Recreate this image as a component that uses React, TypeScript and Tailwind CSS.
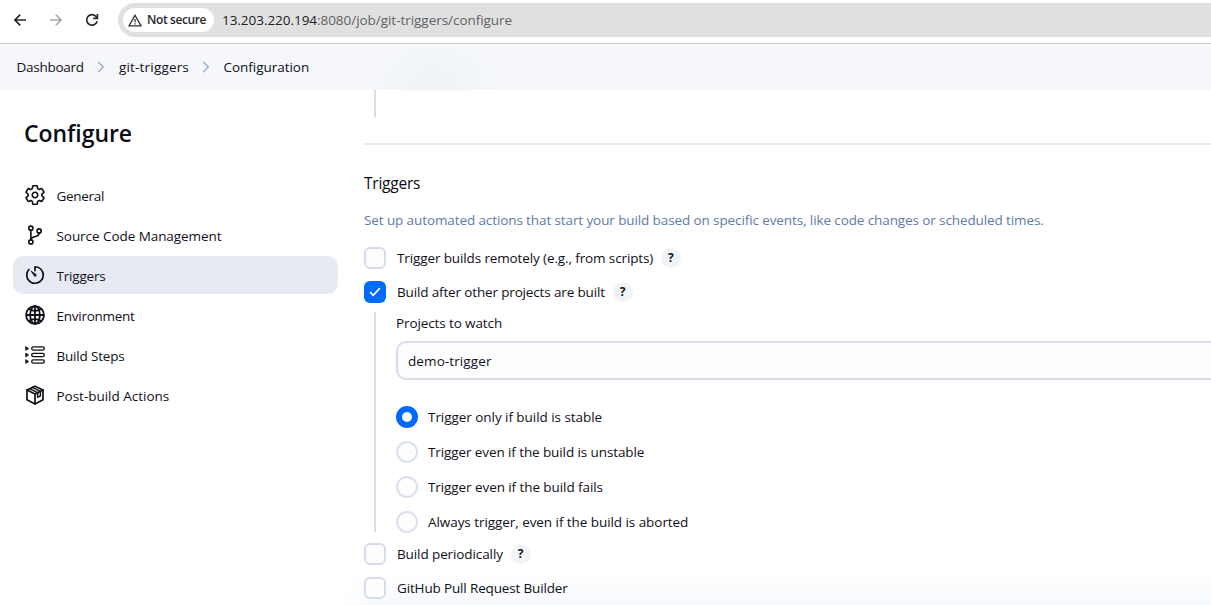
import type { ReactNode } from 'react';
import { IoGitBranchOutline, IoGlobeOutline, IoSettingsOutline, IoTimerOutline } from 'react-icons/io5';

function StepsIcon() {
  return (
    <svg width="20" height="20" viewBox="0 0 20 20" fill="none" stroke="currentColor" strokeWidth="1.35" strokeLinejoin="round">
      {[3.5, 10, 16.5].map((y) => (
        <g key={y}>
          <path d={`M0.9 ${y - 1.5} L3.2 ${y} L0.9 ${y + 1.5} Z`} />
          <rect x="6.7" y={y - 1.6} width="12.6" height="3.2" rx="1.6" />
        </g>
      ))}
    </svg>
  );
}

function PackageIcon() {
  return (
    <svg width="20" height="20" viewBox="0 0 20 20" fill="none" stroke="currentColor" strokeWidth="1.7" strokeLinejoin="round" strokeLinecap="round">
      <path d="M10 1.2 L18 5 V14.8 L10 18.9 L2 14.8 V5 Z" />
      <path d="M2 5 L10 9 L18 5 M10 9 V18.9" />
      <path d="M4.6 3.7 L12.6 7.7 V12.3 L15.4 10.9 V6.3 L7.4 2.4" strokeWidth="1.5" />
    </svg>
  );
}

function Chevron() {
  return (
    <svg width="8" height="12" viewBox="0 0 8 12" fill="none" stroke="#96adcd" strokeWidth="1.3" strokeLinecap="round" strokeLinejoin="round">
      <path d="M1.5 1.2 L6.3 6 L1.5 10.8" />
    </svg>
  );
}

function BrowserBar() {
  return (
    <div className="flex h-11 shrink-0 items-start border-b border-[#c9cdcb] bg-white pt-[3px]">
      <div className="flex h-[34px] w-[118px] shrink-0 items-center pl-[13px]">
        <svg width="14" height="14" viewBox="0 0 14 14" fill="none" stroke="#26292c" strokeWidth="1.7">
          <path d="M13 7 H2 M7.2 1.7 L1.9 7 L7.2 12.3" />
        </svg>
        <svg className="ml-[22px]" width="14" height="14" viewBox="0 0 14 14" fill="none" stroke="#a2a4a6" strokeWidth="1.5">
          <path d="M1 7 H12 M6.8 1.7 L12.1 7 L6.8 12.3" />
        </svg>
        <svg className="ml-[22px]" width="14" height="14" viewBox="0 0 14 14" fill="none" stroke="#26292c" strokeWidth="1.7">
          <path d="M12.1 8.2 A5.3 5.3 0 1 1 11.2 3.7 L12.2 5" />
          <path d="M12.4 1 V5.3 H8.2" />
        </svg>
      </div>
      <div className="flex h-[34px] flex-1 items-center rounded-l-full bg-[#e0e0e0] pl-[5px]">
        <div className="flex h-6 w-[91px] items-center gap-[5px] rounded-full bg-white pl-[5px] text-[12px] font-semibold text-[#26282b]">
          <svg width="14" height="13" viewBox="0 0 14 13" fill="none" stroke="#303336" strokeWidth="1.3">
            <path d="M7 1.3 L13 11.9 H1 Z" strokeLinejoin="miter" />
            <path d="M7 4.9 V8.3 M7 9.2 V10.4" />
          </svg>
          <span className="tracking-[-0.4px] whitespace-nowrap">Not secure</span>
        </div>
        <span className="ml-2 text-[13.5px] tracking-[-0.04px] text-[#5f6368]">
          <span className="text-[#202124]">13.203.220.194</span>:8080/job/git-triggers/configure
        </span>
      </div>
    </div>
  );
}

function Breadcrumbs() {
  return (
    <nav className="relative flex h-[46px] shrink-0 items-center bg-[#f5f7fa] pl-[16.5px]">
      <div className="absolute top-0 left-[366px] h-[46px] w-[134px] bg-[radial-gradient(ellipse_62px_46px_at_50%_90%,#f0f3f7_0%,#f2f5f8_50%,#f5f7fa_100%)]" />
      <div className="absolute top-[46px] left-[403px] h-px w-[66px] bg-[#f4f7fb]" />
      <span className="w-[80.5px] tracking-[-0.26px]">Dashboard</span>
      <Chevron />
      <span className="ml-[14px] w-[83px] tracking-[0.18px]">git-triggers</span>
      <Chevron />
      <span className="ml-[13.5px] tracking-[-0.03px]">Configuration</span>
    </nav>
  );
}

function SideItem({ icon, label, spacing, active }: { icon: ReactNode; label: string; spacing: string; active?: boolean }) {
  return (
    <a className={`flex h-[38px] items-center rounded-[10px] pl-[11px] ${active ? 'bg-[#e6eaf3]' : ''}`}>
      <span className="flex w-[22px] justify-center">{icon}</span>
      <span className={`ml-[10.5px] pt-[2px] ${spacing}`}>{label}</span>
    </a>
  );
}

function Sidebar() {
  const outline = '[&_*]:[stroke-width:38px]';
  return (
    <aside className="w-[364px] shrink-0 pr-[26px] pl-[13px]">
      <h1 className="mt-[27px] ml-[11px] h-[32px] text-[23px] leading-[32px] font-semibold tracking-[-0.05px] text-[#0b0b14]">Configure</h1>
      <div className="mt-[27px] flex flex-col gap-[2px]">
        <SideItem icon={<IoSettingsOutline size={22} className={outline} />} label="General" spacing="tracking-[-0.3px]" />
        <SideItem icon={<IoGitBranchOutline size={22} className={outline} />} label="Source Code Management" spacing="tracking-[-0.06px]" />
        <SideItem icon={<IoTimerOutline size={22} className="[&>path:first-of-type]:[stroke-width:40px] [&>path:last-of-type]:[stroke-width:0]" />} label="Triggers" spacing="tracking-[-0.2px]" active />
        <SideItem icon={<IoGlobeOutline size={22} className="[&_*]:[stroke-width:42px]" />} label="Environment" spacing="tracking-[-0.26px]" />
        <SideItem icon={<StepsIcon />} label="Build Steps" spacing="tracking-[-0.19px]" />
        <SideItem icon={<PackageIcon />} label="Post-build Actions" spacing="tracking-[-0.02px]" />
      </div>
    </aside>
  );
}

function CheckRow({ label, spacing, checked, help }: { label: string; spacing: string; checked?: boolean; help?: boolean }) {
  return (
    <div className="flex h-[22px] items-center">
      {checked ? (
        <span className="flex size-[22px] items-center justify-center rounded-[6px] bg-[#006aff]">
          <svg width="12" height="10" viewBox="0 0 12 10" fill="none" stroke="#fff" strokeWidth="1.7" strokeLinecap="round" strokeLinejoin="round">
            <path d="M1.6 5.6 L4.3 8.3 L10.4 1.6" />
          </svg>
        </span>
      ) : (
        <span className="size-[22px] rounded-[6px] border-2 border-[#d7dcea] bg-[#fdfdfe]" />
      )}
      <span className={`ml-[11px] ${spacing}`}>{label}</span>
      {help && (
        <span className="ml-[7.7px] flex size-5 items-center justify-center rounded-full bg-[#f0f4f8] text-[12px] font-bold">?</span>
      )}
    </div>
  );
}

function RadioRow({ label, spacing, checked }: { label: string; spacing: string; checked?: boolean }) {
  return (
    <div className="flex h-[22px] items-center">
      <span className={`size-[22px] rounded-full ${checked ? 'border-[6px] border-[#006aff] bg-white' : 'border-2 border-[#dce1ee] bg-[#fdfdfe]'}`} />
      <span className={`ml-[10px] ${spacing}`}>{label}</span>
    </div>
  );
}

function TriggersForm() {
  return (
    <main className="relative z-10 min-w-0 flex-1">
      <div className="ml-[10px] h-[27px] w-[2px] bg-[#d7dcea]" />
      <div className="mt-[26px] h-[2px] bg-[#e6eaf1]" />
      <h2 className="mt-[26px] h-6 text-[15.5px] leading-6 tracking-[-0.22px] text-[#0b0b14]">Triggers</h2>
      <p className="mt-[15px] h-5 leading-5 tracking-[-0.105px] whitespace-nowrap text-[#607ba8]">
        Set up automated actions that start your build based on specific events, like code changes or scheduled times.
      </p>
      <div className="mt-[17px] flex flex-col gap-3">
        <CheckRow label="Trigger builds remotely (e.g., from scripts)" spacing="tracking-[-0.12px]" help />
        <CheckRow label="Build after other projects are built" spacing="tracking-[-0.15px]" checked help />
      </div>
      <div className="mt-[9px] ml-[10px] h-[220px] border-l-2 border-[#d7dcea] pl-5">
        <div className="h-[29px] pt-[1px] leading-5 tracking-[-0.11px]">Projects to watch</div>
        <div className="flex h-[39px] items-center rounded-l-[10px] border-2 border-r-0 border-[#d7dcea] bg-[#fdfdfd] pt-[2px] pl-[10px] tracking-[0.1px]">
          demo-trigger
        </div>
        <div className="mt-[26px] flex flex-col gap-[13px]">
          <RadioRow label="Trigger only if build is stable" spacing="tracking-[-0.05px]" checked />
          <RadioRow label="Trigger even if the build is unstable" spacing="tracking-[-0.1px]" />
          <RadioRow label="Trigger even if the build fails" spacing="tracking-[-0.08px]" />
          <RadioRow label="Always trigger, even if the build is aborted" spacing="tracking-[-0.06px]" />
        </div>
      </div>
      <div className="mt-[11px] flex flex-col gap-3">
        <CheckRow label="Build periodically" spacing="tracking-[-0.1px]" help />
        <CheckRow label="GitHub Pull Request Builder" spacing="tracking-[-0.15px]" />
      </div>
    </main>
  );
}

export default function App() {
  return (
    <div className="relative flex h-[605px] w-full flex-col overflow-hidden bg-white font-['Open_Sans','Noto_Sans',sans-serif] text-[13.5px] text-[#10101a]">
      <BrowserBar />
      <Breadcrumbs />
      <div className="flex min-h-0 flex-1">
        <Sidebar />
        <TriggersForm />
      </div>
      <div className="pointer-events-none absolute right-0 bottom-0 left-[340px] h-[32px] bg-linear-to-b from-[#f6f9fc]/0 to-[#f6f9fc] [mask-image:linear-gradient(to_right,transparent,black_40px)]" />
    </div>
  );
}
